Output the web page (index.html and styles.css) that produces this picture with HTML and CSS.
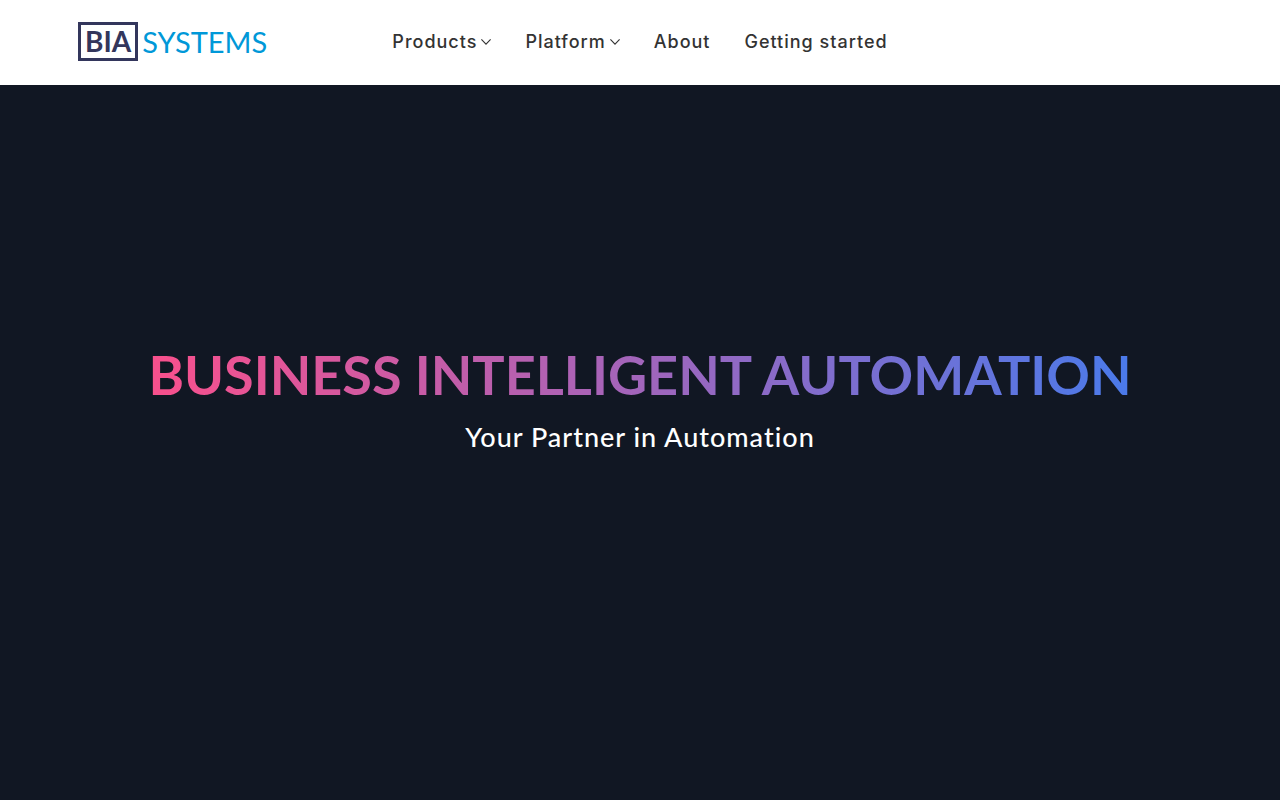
FILE: index.html
```
<!DOCTYPE html>
<html lang="en">
<head>
  <meta charset="UTF-8">
  <meta name="viewport" content="width=device-width, initial-scale=1.0">
  <title>BIA Systems</title>
  <link rel="stylesheet" href="styles.css">
</head>
<body>
  <header class="header">
    <a class="logo" href="#"><span class="logo-box">BIA</span><span class="logo-name">SYSTEMS</span></a>
    <nav class="nav">
      <button class="nav-item" type="button">Products
        <svg class="chevron" viewBox="0 0 10 6" aria-hidden="true"><path d="M0.4 0.4L5 5.2L9.6 0.4"/></svg>
      </button>
      <button class="nav-item" type="button">Platform
        <svg class="chevron" viewBox="0 0 10 6" aria-hidden="true"><path d="M0.4 0.4L5 5.2L9.6 0.4"/></svg>
      </button>
      <a class="nav-item" href="#">About</a>
      <a class="nav-item" href="#">Getting started</a>
    </nav>
  </header>

  <main class="hero">
    <h1 class="hero-title">BUSINESS INTELLIGENT AUTOMATION</h1>
    <p class="hero-subtitle">Your Partner in Automation</p>
  </main>
</body>
</html>
```
FILE: styles.css
```
* {
  margin: 0;
  padding: 0;
  box-sizing: border-box;
}

body {
  min-height: 100vh;
  display: flex;
  flex-direction: column;
  font-family: Lato, "Open Sans", sans-serif;
  background-color: #111723;
}

/* Header */
.header {
  display: grid;
  grid-template-columns: 1fr auto 1fr;
  align-items: center;
  padding: 22px 78px 24px;
  background-color: #fff;
}

.logo {
  justify-self: start;
  display: flex;
  align-items: center;
  gap: 4px;
  line-height: 33px;
  text-decoration: none;
}

.logo-box {
  padding: 0 4px;
  border: 3px solid #33365c;
  color: #33365c;
  font-size: 28px;
  font-weight: 700;
}

.logo-name {
  color: #0098d8;
  font-size: 29px;
  font-weight: 400;
}

.nav {
  display: flex;
  align-items: center;
  gap: 34px;
}

.nav-item {
  display: flex;
  align-items: center;
  gap: 4px;
  border: none;
  background: none;
  color: #333;
  font-family: Inter, sans-serif;
  font-size: 18px;
  font-weight: 500;
  line-height: 24px;
  letter-spacing: 1px;
  text-decoration: none;
  cursor: pointer;
}

.chevron {
  width: 10px;
  height: 6px;
  fill: none;
  stroke: #333;
  stroke-width: 1.1;
}

/* Hero */
.hero {
  flex: 1;
  display: flex;
  flex-direction: column;
  align-items: center;
  justify-content: center;
  gap: 12px;
  padding: 24px 24px 112px;
  text-align: center;
}

.hero-title {
  color: transparent;
  font-size: 54px;
  font-weight: 700;
  line-height: 64px;
  background: linear-gradient(90deg, #f9508c, #4a7aea);
  -webkit-background-clip: text;
  background-clip: text;
}

.hero-subtitle {
  color: #fff;
  font-size: 27px;
  font-weight: 500;
  line-height: 36px;
  letter-spacing: 1px;
}
```
